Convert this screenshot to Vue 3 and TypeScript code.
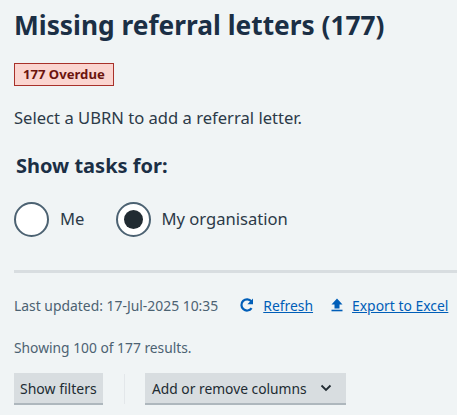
<script setup lang="ts">
const title: string = 'Missing referral letters (177)'
</script>

<template>
  <main class="page">
    <h1 class="title">{{ title }}</h1>
    <div class="tag-row"><span class="tag">177 Overdue</span></div>
    <p class="intro">Select a UBRN to add a referral letter.</p>
    <h2 class="legend">Show tasks for:</h2>
    <div class="radios">
      <label class="radio"><span class="dot"></span><span>Me</span></label>
      <label class="radio"><span class="dot on"></span><span>My organisation</span></label>
    </div>
    <hr class="rule" />
    <div class="meta">
      <span class="updated">Last updated: 17-Jul-2025 10:35</span>
      <span class="action first">
        <svg class="icon" viewBox="0 0 16 16" width="16" height="16" aria-hidden="true">
          <path d="M12.6 11.2A5.6 5.6 0 1 1 12.4 4.4" fill="none" stroke="#005eb8" stroke-width="2.2" />
          <path d="M14 1.4V7.2H8.4Z" fill="#005eb8" />
        </svg>
        <a>Refresh</a>
      </span>
      <span class="action second">
        <svg class="icon" viewBox="0 0 14 16" width="14" height="16" aria-hidden="true">
          <path d="M7 1.5L12.5 7.5H9.5V11.5H4.5V7.5H1.5Z" fill="#005eb8" />
          <path d="M1.5 13.5H12.5" stroke="#005eb8" stroke-width="1.6" />
        </svg>
        <a>Export to Excel</a>
      </span>
    </div>
    <p class="showing">Showing 100 of 177 results.</p>
    <div class="buttons">
      <button class="btn" type="button">Show filters</button>
      <span class="divider"></span>
      <button class="btn wide" type="button">
        Add or remove columns
        <svg viewBox="0 0 12 8" width="12" height="8" aria-hidden="true">
          <path d="M1.5 1.5L6 6L10.5 1.5" fill="none" stroke="#212b32" stroke-width="1.8" />
        </svg>
      </button>
    </div>
  </main>
</template>

<style>
html, body { margin: 0; background: #fff; }
</style>

<style scoped>
.page {
  box-sizing: border-box;
  height: 415px;
  padding: 7px 0 0 14px;
  background: #f0f4f5;
  color: #212b32;
  font-family: "Noto Sans", "Open Sans", sans-serif;
  overflow: hidden;
}
.title {
  margin: 0;
  font-size: 26.3px;
  line-height: 36px;
  font-weight: 700;
  color: #1b2f45;
}
.tag-row { margin-top: 20px; display: flex; }
.tag {
  box-sizing: border-box;
  height: 23px;
  padding: 0 8px;
  border: 1px solid #a8312a;
  background: #fbd5d0;
  color: #6b140e;
  font-size: 13.1px;
  font-weight: 700;
  line-height: 20px;
}
.intro {
  margin: 21px 0 0;
  font-size: 16.6px;
  line-height: 22px;
  color: #2c3a48;
}
.legend {
  margin: 23px 0 0 2px;
  font-size: 20px;
  line-height: 28px;
  font-weight: 700;
  color: #1b2f45;
}
.radios { margin-top: 21px; display: flex; gap: 32px; }
.radio {
  display: flex;
  align-items: center;
  gap: 10px;
  font-size: 16.6px;
  line-height: 36px;
  color: #2c3a48;
}
.dot {
  box-sizing: border-box;
  width: 35px;
  height: 35px;
  margin-right: 0;
  border-radius: 50%;
  border: 2px solid #4c6272;
  background: #fff;
  display: flex;
  align-items: center;
  justify-content: center;
}
.radio:first-child { gap: 11px; }
.dot.on::after {
  content: "";
  width: 19px;
  height: 19px;
  border-radius: 50%;
  background: #212b32;
}
.rule {
  margin: 33px 0 0;
  height: 3px;
  border: 0;
  background: #d8dde0;
}
.meta {
  margin-top: 22px;
  display: flex;
  align-items: center;
  height: 20px;
  font-size: 13.9px;
  white-space: nowrap;
  color: #4c6272;
}
.action { display: flex; align-items: center; color: #005eb8; }
.action a { text-decoration: underline; }
.first { margin-left: 21px; gap: 8px; }
.second { margin-left: 17px; gap: 8px; }
.showing {
  margin: 24px 0 0;
  font-size: 13.8px;
  line-height: 18px;
  color: #4c6272;
}
.buttons {
  margin-top: 16px;
  display: flex;
  align-items: center;
}
.btn {
  box-sizing: border-box;
  height: 32px;
  width: 89px;
  padding: 0 6px;
  border: 0;
  border-bottom: 2px solid #aeb7bd;
  background: #d8dde0;
  color: #212b32;
  font: inherit;
  font-size: 14px;
  display: flex;
  align-items: center;
  white-space: nowrap;
}
.wide { width: 201px; gap: 13px; padding: 0 11px 0 7px; font-size: 13.8px; }
.divider {
  width: 1px;
  height: 30px;
  margin: 0 20px 0 21px;
  background: #e3e7ea;
}
</style>
